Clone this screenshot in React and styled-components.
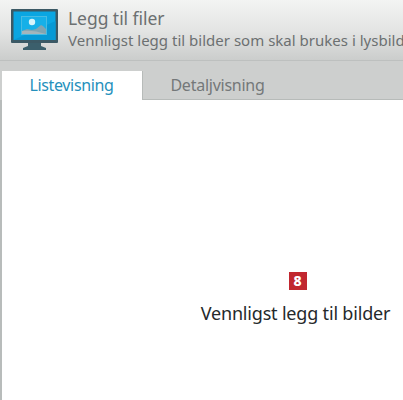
import React, { useState } from 'react';
import styled, { createGlobalStyle } from "styled-components";


function App() {

    const [activeTab, setActiveTab] = useState("list")

    return (
        <Window>
            <GlobalStyle />
            <Header>
                <MonitorIcon />
                <Heading>
                    <Title>Legg til filer</Title>
                    <Subtitle>Vennligst legg til bilder som skal brukes i lysbild</Subtitle>
                </Heading>
            </Header>
            <Tabs>
                <Tab $width={140} $spacing={-0.35} $active={activeTab === "list"} onClick={() => setActiveTab("list")}>
                    Listevisning
                </Tab>
                <Tab $width={151} $spacing={-0.25} $active={activeTab === "details"} onClick={() => setActiveTab("details")}>
                    Detaljvisning
                </Tab>
                <TabFill />
            </Tabs>
            <Content>
                <Badge>8</Badge>
                <Message>Vennligst legg til bilder</Message>
            </Content>
        </Window>
    )
};

function MonitorIcon() {
    return (
        <Monitor width="47" height="42" viewBox="0 0 47 42">
            <path d="M17 34h13v3l5 2v2H12v-2l5-2z" fill="#3b5f6c" />
            <rect width="47" height="34" rx="1" fill="#3b5965" />
            <rect x="2.5" y="2.5" width="42" height="28.5" fill="#0aa6e2" />
            <path d="M2.5 31h42V12z" fill="#0699d5" />
            <rect x="10.5" y="7.5" width="25" height="18" fill="#16b0e8" stroke="#48bce3" />
            <circle cx="21" cy="13" r="3.2" fill="#d5f4fb" />
            <path d="M11 22l5-2 5 1 4-1 5-4 2 1 3 3v5H11z" fill="#81a5b2" />
            <path d="M11 22c7-1 15 0 24 3H11z" fill="#a4b5bb" />
        </Monitor>
    )
}


const GlobalStyle = createGlobalStyle`
    * {
        box-sizing: border-box;
    }

    body {
        margin: 0;
        overflow: hidden;
        font-family: "Noto Sans", "Open Sans", sans-serif;
    }
`

const Window = styled.div`
    display: flex;
    flex-direction: column;
    width: 403px;
    height: 400px;
    overflow: hidden;
    background: #cdcfce;
`

const Header = styled.header`
    display: flex;
    flex-shrink: 0;
    height: 61px;
    padding: 9px 0 0 11px;
    background: linear-gradient(#f3f4f3, #e4e5e4 50%, #cbcdcc);
    border-bottom: 1px solid #bdc0bf;
`

const Monitor = styled.svg`
    flex-shrink: 0;
`

const Heading = styled.div`
    padding-left: 10px;
    margin-top: -3px;
    white-space: nowrap;
    color: #6c7071;
`

const Title = styled.h1`
    margin: 0;
    font-size: 17.5px;
    line-height: 25px;
    font-weight: 400;
    letter-spacing: -0.05px;
`

const Subtitle = styled.p`
    margin: 0;
    font-size: 15px;
    line-height: 18px;
    letter-spacing: 0.01px;
`

const Tabs = styled.div`
    display: flex;
    flex-shrink: 0;
    height: 39px;
    padding: 10px 0 0 2px;
`

const Tab = styled.button`
    width: ${props => props.$width}px;
    padding: 0 1px 1px 0;
    border: 0;
    border-left: ${props => props.$active ? "0" : "1px solid #b7bbb9"};
    border-bottom: ${props => props.$active ? "0" : "1px solid #b7bbb9"};
    background: ${props => props.$active ? "#fff" : "transparent"};
    color: ${props => props.$active ? "#2590bc" : "#747879"};
    font-family: inherit;
    font-size: 16px;
    letter-spacing: ${props => props.$spacing}px;
`

const TabFill = styled.div`
    flex: 1;
    border-bottom: 1px solid #b7bbb9;
`

const Content = styled.main`
    display: flex;
    flex: 1;
    flex-direction: column;
    align-items: center;
    padding: 172px 0 0 188px;
    border-left: 2px solid #b8bcbb;
    background: #fff;
`

const Badge = styled.span`
    width: 18px;
    height: 18px;
    margin-left: 2px;
    background: #c1272f;
    color: #fff;
    font-size: 14px;
    font-weight: 800;
    line-height: 18px;
    text-align: center;
`

const Message = styled.p`
    margin: 11px 2px 0 0;
    color: #25292b;
    font-size: 18px;
    line-height: 24px;
    letter-spacing: -0.18px;
    white-space: nowrap;
`


export default App
